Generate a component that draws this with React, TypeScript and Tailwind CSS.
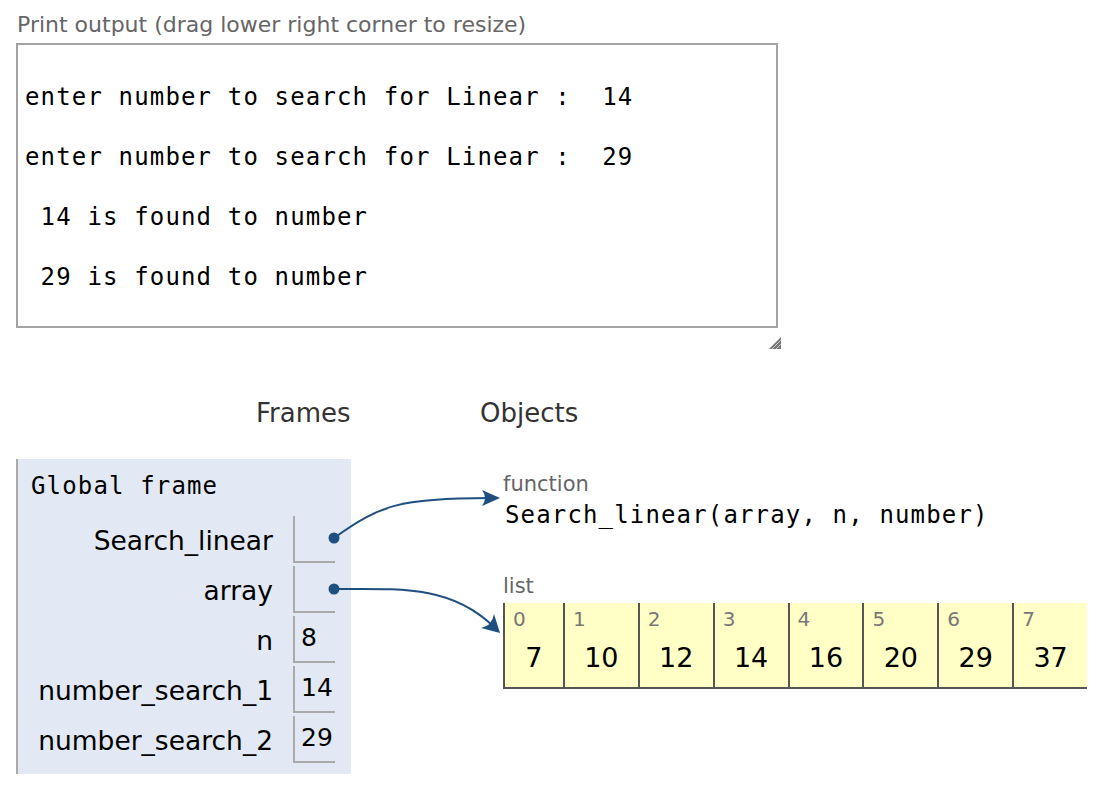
import React from "react";

const sans = "font-['DejaVu_Sans',Verdana,sans-serif]";
const mono = "font-['DejaVu_Sans_Mono',monospace]";

const printLines = [
  "",
  "enter number to search for Linear :  14",
  "",
  "enter number to search for Linear :  29",
  "",
  " 14 is found to number",
  "",
  " 29 is found to number",
];

const vars: { name: string; value?: string }[] = [
  { name: "Search_linear" },
  { name: "array" },
  { name: "n", value: "8" },
  { name: "number_search_1", value: "14" },
  { name: "number_search_2", value: "29" },
];

const list = [7, 10, 12, 14, 16, 20, 29, 37];

const Arrows = () => (
  <svg
    className="absolute left-0 top-0 pointer-events-none"
    width={1102}
    height={788}
    viewBox="0 0 1102 788"
  >
    <path
      d="M334 538 C 380 505, 400 498, 490 498"
      fill="none"
      stroke="#1f4f7f"
      strokeWidth={2}
    />
    <path d="M500 498 L482 490 Q488 498 482 506 Z" fill="#1f4f7f" />
    <path
      d="M334 589 C 400 589, 450 585, 493 626"
      fill="none"
      stroke="#1f4f7f"
      strokeWidth={2}
    />
    <path d="M500 633 L494 614 Q492 626 481 628 Z" fill="#1f4f7f" />
    <circle cx={334} cy={538} r={5.5} fill="#1f4f7f" />
    <circle cx={334} cy={589} r={5.5} fill="#1f4f7f" />
  </svg>
);

export default function App() {
  return (
    <div className="relative w-[1102px] h-[788px] bg-white overflow-hidden">
      <div className="pl-[16px] pt-[10px]">
        <div className={`${sans} text-[22px] leading-[30px] text-[#666] pl-[1px]`}>
          Print output (drag lower right corner to resize)
        </div>
        <div className="mt-[3px] w-[762px] h-[285px] border-2 border-[#a3a3a3] pt-[7px] pl-[7px]">
          {printLines.map((l, i) => (
            <div
              key={i}
              className={`${mono} text-[24px] leading-[30px] tracking-[1.15px] text-black whitespace-pre h-[30px]`}
            >
              {l}
            </div>
          ))}
        </div>
        <div className="flex justify-end w-[766px] mt-[8px]">
          <svg width={14} height={14} viewBox="0 0 14 14">
            <path d="M13 1 L13 13 L1 13 Z" fill="#777" />
            <path d="M4 13 L13 4 M8 13 L13 8" stroke="#ccc" strokeWidth={1} />
          </svg>
        </div>

        <div className={`${sans} flex text-[26px] leading-[30px] text-[#333] mt-[48px]`}>
          <div className="w-[464px] pl-[240px]">Frames</div>
          <div>Objects</div>
        </div>

        <div className="flex mt-[31px]">
          <div className="w-[335px] h-[315px] bg-[#e2e9f5] border-l-2 border-[#aaa] pt-[12px]">
            <div className={`${mono} text-[24px] leading-[30px] tracking-[1.15px] pl-[13px] text-black`}>
              Global frame
            </div>
            <div className="mt-[15px] flex flex-col gap-[3px]">
              {vars.map((v) => (
                <div key={v.name} className="flex items-end h-[47px]">
                  <div className={`${sans} w-[255px] text-right text-[26.5px] leading-[30px] text-black pb-[7px] whitespace-nowrap`}>
                    {v.name}
                  </div>
                  <div
                    className={`${sans} ml-[20px] w-[42px] h-[47px] border-l-2 border-b-2 border-[#aaa] text-[25px] leading-[30px] text-black pl-[6px] pt-[7px]`}
                  >
                    {v.value}
                  </div>
                </div>
              ))}
            </div>
          </div>

          <div className="ml-[152px] pt-[12px]">
            <div className={`${sans} text-[21px] leading-[26px] text-[#666]`}>function</div>
            <div className={`${mono} text-[24px] leading-[30px] tracking-[1.15px] text-black pl-[2px] mt-[3px]`}>
              Search_linear(array, n, number)
            </div>
            <div className={`${sans} text-[21px] leading-[26px] text-[#666] mt-[43px]`}>list</div>
            <div className="flex h-[86px] bg-[#ffffc6] border-b-2 border-[#555] w-[584px] mt-[4px]">
              {list.map((v, i) => (
                <div
                  key={i}
                  className={`${sans} border-l-2 border-[#555] ${i === 0 ? "w-[60px]" : "w-[75px]"} flex flex-col`}
                >
                  <div className="text-[20px] leading-[24px] text-[#777] pl-[8px] pt-[4px]">{i}</div>
                  <div className="text-[27px] leading-[32px] text-black text-center mt-[11px]">{v}</div>
                </div>
              ))}
            </div>
          </div>
        </div>
      </div>
      <Arrows />
    </div>
  );
}
